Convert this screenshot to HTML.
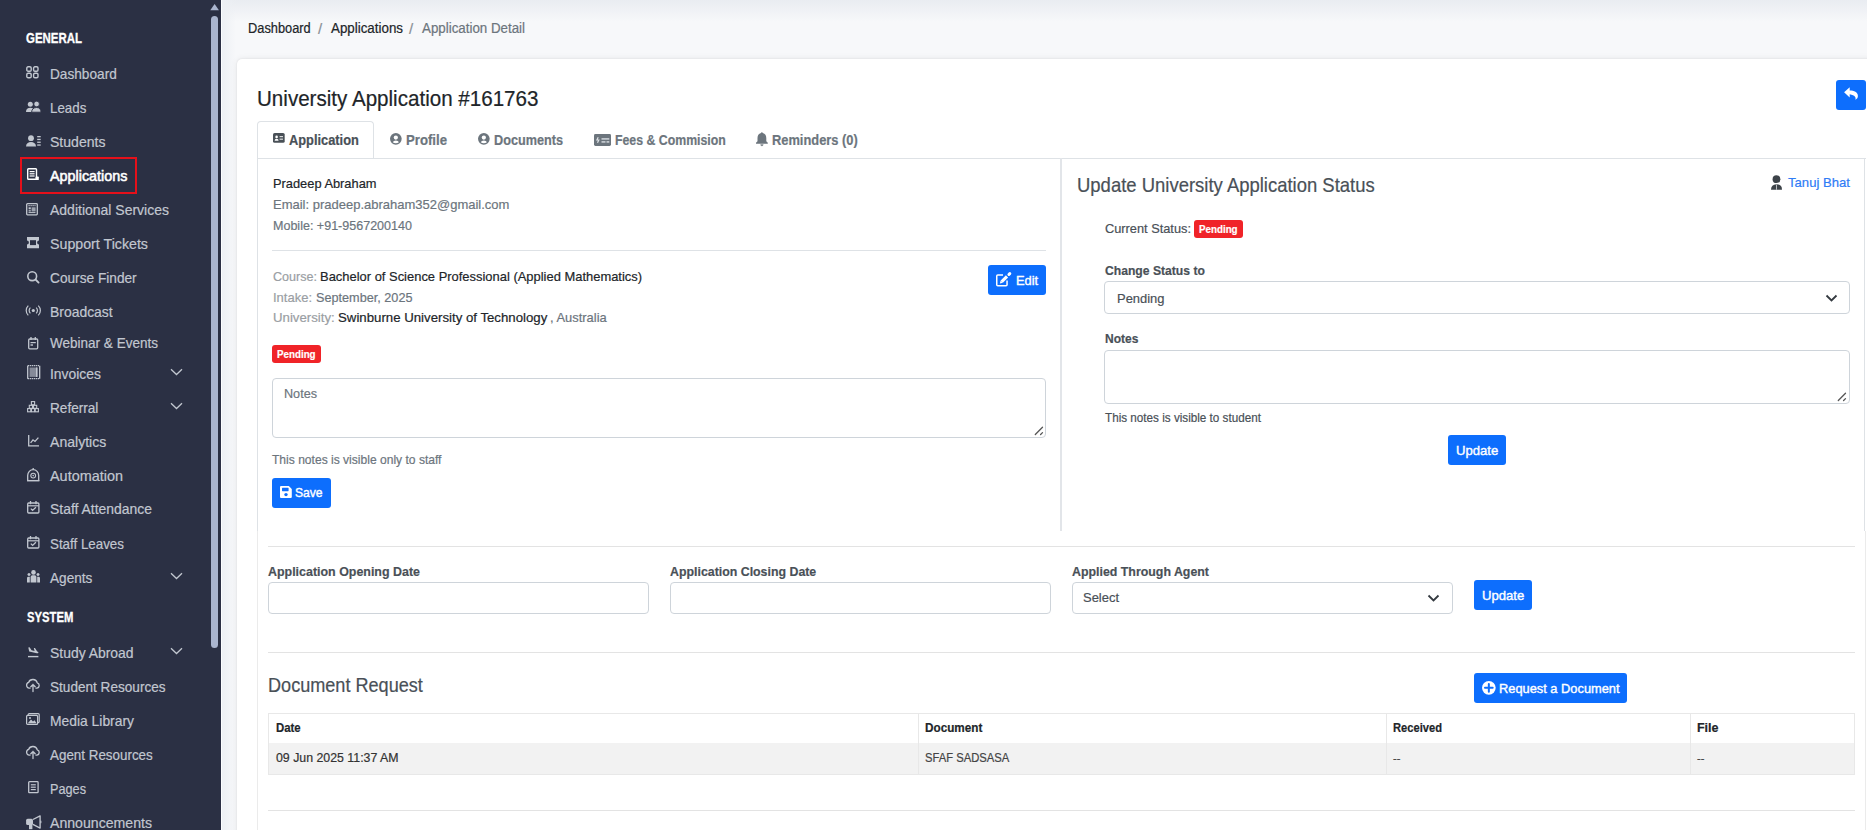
<!DOCTYPE html>
<html><head><meta charset="utf-8"><style>
html,body{margin:0;padding:0;}
body{width:1867px;height:830px;overflow:hidden;position:relative;background:#f7f8fa;font-family:"Liberation Sans",sans-serif;}
.t{position:absolute;white-space:nowrap;line-height:1;transform-origin:0 0;-webkit-text-stroke:0.2px currentColor;}
.sidebar{position:absolute;left:0;top:0;width:221px;height:830px;background:#2b3044;}
.card{position:absolute;left:237px;top:59px;width:1640px;height:800px;background:#fff;border-radius:5px;box-shadow:0 0 2px rgba(0,0,0,.10),0 0 7px rgba(0,0,0,.07);}
.topshade{position:absolute;left:221px;top:0;width:1646px;height:22px;background:linear-gradient(#e9ecf1,rgba(247,248,250,0));}
.sbshade{position:absolute;left:222px;top:0;width:14px;height:830px;background:linear-gradient(90deg,#edf0f4,rgba(247,248,250,0));}
</style></head><body>
<div class="topshade"></div><div class="sbshade"></div>
<div class="card"></div>
<div class="sidebar"></div>
<div style="position:absolute;left:221px;top:0px;width:1px;height:830px;background:#fbfdff;"></div>
<svg style="position:absolute;left:210px;top:3px" width="10" height="9"><path d="M0.3 7.3 L4.6 1.0 L8.9 7.3 Z" fill="#aab5cf"/></svg>
<div style="position:absolute;left:211px;top:16px;width:7px;height:632px;background:#aab5cf;border-radius:3.5px;"></div>
<div class="t" style="left:26.1px;top:31.28px;font-size:14.20px;color:#ffffff;font-weight:bold;transform:scaleX(0.8066);-webkit-text-stroke:0.3px #fff;">GENERAL</div>
<div class="t" style="left:26.7px;top:609.88px;font-size:14.20px;color:#ffffff;font-weight:bold;transform:scaleX(0.7930);-webkit-text-stroke:0.3px #fff;">SYSTEM</div>
<div class="t" style="left:50.3px;top:66.84px;font-size:14.60px;color:#c2c7d0;transform:scaleX(0.9353);">Dashboard</div>
<div class="t" style="left:50.3px;top:100.94px;font-size:14.60px;color:#c2c7d0;transform:scaleX(0.9126);">Leads</div>
<div class="t" style="left:50.3px;top:134.74px;font-size:14.60px;color:#c2c7d0;transform:scaleX(0.9631);">Students</div>
<div class="t" style="left:50.3px;top:168.54px;font-size:14.60px;color:#ffffff;transform:scaleX(0.9832);-webkit-text-stroke:0.55px #fff;">Applications</div>
<div class="t" style="left:50.3px;top:202.74px;font-size:14.60px;color:#c2c7d0;transform:scaleX(0.9584);">Additional Services</div>
<div class="t" style="left:50.3px;top:236.74px;font-size:14.60px;color:#c2c7d0;transform:scaleX(0.9740);">Support Tickets</div>
<div class="t" style="left:50.3px;top:270.94px;font-size:14.60px;color:#c2c7d0;transform:scaleX(0.9373);">Course Finder</div>
<div class="t" style="left:50.3px;top:304.74px;font-size:14.60px;color:#c2c7d0;transform:scaleX(0.9539);">Broadcast</div>
<div class="t" style="left:50.3px;top:335.94px;font-size:14.60px;color:#c2c7d0;transform:scaleX(0.9264);">Webinar &amp; Events</div>
<div class="t" style="left:50.3px;top:366.64px;font-size:14.60px;color:#c2c7d0;transform:scaleX(0.9523);">Invoices</div>
<div class="t" style="left:50.3px;top:400.64px;font-size:14.60px;color:#c2c7d0;transform:scaleX(0.9321);">Referral</div>
<div class="t" style="left:50.3px;top:434.84px;font-size:14.60px;color:#c2c7d0;transform:scaleX(0.9637);">Analytics</div>
<div class="t" style="left:50.3px;top:468.64px;font-size:14.60px;color:#c2c7d0;transform:scaleX(0.9885);">Automation</div>
<div class="t" style="left:50.3px;top:502.44px;font-size:14.60px;color:#c2c7d0;transform:scaleX(0.9544);">Staff Attendance</div>
<div class="t" style="left:50.3px;top:536.64px;font-size:14.60px;color:#c2c7d0;transform:scaleX(0.9148);">Staff Leaves</div>
<div class="t" style="left:50.3px;top:570.64px;font-size:14.60px;color:#c2c7d0;transform:scaleX(0.9329);">Agents</div>
<div class="t" style="left:50.3px;top:645.84px;font-size:14.60px;color:#c2c7d0;transform:scaleX(0.9537);">Study Abroad</div>
<div class="t" style="left:50.3px;top:679.54px;font-size:14.60px;color:#c2c7d0;transform:scaleX(0.9310);">Student Resources</div>
<div class="t" style="left:50.3px;top:714.04px;font-size:14.60px;color:#c2c7d0;transform:scaleX(0.9498);">Media Library</div>
<div class="t" style="left:50.3px;top:748.14px;font-size:14.60px;color:#c2c7d0;transform:scaleX(0.9179);">Agent Resources</div>
<div class="t" style="left:50.3px;top:782.04px;font-size:14.60px;color:#c2c7d0;transform:scaleX(0.8697);">Pages</div>
<div class="t" style="left:50.3px;top:815.74px;font-size:14.60px;color:#c2c7d0;transform:scaleX(0.9668);">Announcements</div>
<div style="position:absolute;left:20px;top:157px;width:117px;height:37px;border:2px solid #e5101a;box-sizing:border-box;"></div>
<svg style="position:absolute;left:170px;top:368.0px" width="13" height="8"><path d="M1 1.2 L6.5 6.5 L12 1.2" stroke="#c2c7d0" stroke-width="1.3" fill="none"/></svg>
<svg style="position:absolute;left:170px;top:402.0px" width="13" height="8"><path d="M1 1.2 L6.5 6.5 L12 1.2" stroke="#c2c7d0" stroke-width="1.3" fill="none"/></svg>
<svg style="position:absolute;left:170px;top:572.0px" width="13" height="8"><path d="M1 1.2 L6.5 6.5 L12 1.2" stroke="#c2c7d0" stroke-width="1.3" fill="none"/></svg>
<svg style="position:absolute;left:170px;top:647.2px" width="13" height="8"><path d="M1 1.2 L6.5 6.5 L12 1.2" stroke="#c2c7d0" stroke-width="1.3" fill="none"/></svg>
<div class="t" style="left:248.0px;top:22.12px;font-size:13.80px;color:#212529;transform:scaleX(0.9288);">Dashboard</div>
<div class="t" style="left:318.0px;top:21.00px;font-size:15.00px;color:#8a9096;">/</div>
<div class="t" style="left:330.8px;top:22.12px;font-size:13.80px;color:#212529;transform:scaleX(0.9676);">Applications</div>
<div class="t" style="left:409.0px;top:21.00px;font-size:15.00px;color:#8a9096;">/</div>
<div class="t" style="left:421.7px;top:22.12px;font-size:13.80px;color:#6c757d;transform:scaleX(0.9660);">Application Detail</div>
<div class="t" style="left:257.1px;top:87.92px;font-size:21.60px;color:#212529;transform:scaleX(0.9530);">University Application #161763</div>
<div style="position:absolute;left:1836px;top:79.5px;width:30px;height:30px;background:#0d6efd;border-radius:3px;"></div>
<div style="position:absolute;left:257px;top:121px;width:117px;height:38px;border:1px solid #dee2e6;border-bottom:none;border-radius:4px 4px 0 0;background:#fff;box-sizing:border-box;"></div>
<div style="position:absolute;left:257px;top:158px;width:1609px;height:1px;background:#dee2e6;"></div>
<div class="t" style="left:288.5px;top:133.05px;font-size:14.00px;color:#495057;font-weight:bold;transform:scaleX(0.9158);">Application</div>
<div class="t" style="left:405.9px;top:133.05px;font-size:14.00px;color:#6c757d;font-weight:bold;transform:scaleX(0.9411);">Profile</div>
<div class="t" style="left:494.2px;top:133.05px;font-size:14.00px;color:#6c757d;font-weight:bold;transform:scaleX(0.9052);">Documents</div>
<div class="t" style="left:614.6px;top:133.05px;font-size:14.00px;color:#6c757d;font-weight:bold;transform:scaleX(0.8792);">Fees &amp; Commision</div>
<div class="t" style="left:771.7px;top:133.05px;font-size:14.00px;color:#6c757d;font-weight:bold;transform:scaleX(0.9180);">Reminders (0)</div>
<div style="position:absolute;left:257px;top:158px;width:1px;height:373px;background:#dee2e6;"></div>
<div style="position:absolute;left:1864px;top:158px;width:1px;height:373px;background:#dee2e6;"></div>
<div style="position:absolute;left:257px;top:531px;width:1px;height:299px;background:#ebebeb;"></div>
<div style="position:absolute;left:1865px;top:531px;width:1px;height:299px;background:#ebebeb;"></div>
<div style="position:absolute;left:1060px;top:158px;width:2px;height:373px;background:#e2e5e9;"></div>
<div class="t" style="left:272.8px;top:177.39px;font-size:13.60px;color:#212529;transform:scaleX(0.9442);">Pradeep Abraham</div>
<div class="t" style="left:272.8px;top:198.29px;font-size:13.60px;color:#6c757d;transform:scaleX(0.9560);">Email: pradeep.abraham352@gmail.com</div>
<div class="t" style="left:272.8px;top:219.19px;font-size:13.60px;color:#6c757d;transform:scaleX(0.9215);">Mobile: +91-9567200140</div>
<div style="position:absolute;left:272px;top:250px;width:774px;height:1.3px;background:#dee2e6;"></div>
<div class="t" style="left:272.5px;top:269.69px;font-size:13.60px;color:#9a9ea3;transform:scaleX(0.9240);">Course:</div>
<div class="t" style="left:319.6px;top:269.69px;font-size:13.60px;color:#212529;transform:scaleX(0.9515);">Bachelor of Science Professional (Applied Mathematics)</div>
<div class="t" style="left:272.5px;top:290.79px;font-size:13.60px;color:#9a9ea3;transform:scaleX(0.9553);">Intake:</div>
<div class="t" style="left:315.6px;top:290.79px;font-size:13.60px;color:#6c757d;transform:scaleX(0.9317);">September, 2025</div>
<div class="t" style="left:272.5px;top:311.49px;font-size:13.60px;color:#9a9ea3;transform:scaleX(0.9720);">University:</div>
<div class="t" style="left:337.6px;top:311.49px;font-size:13.60px;color:#212529;transform:scaleX(0.9731);">Swinburne University of Technology</div>
<div class="t" style="left:550.3px;top:311.49px;font-size:13.60px;color:#6c757d;transform:scaleX(0.9495);">, Australia</div>
<div style="position:absolute;left:272px;top:345px;width:49px;height:17.8px;background:#f02328;border-radius:3px;"></div>
<div class="t" style="left:277.1px;top:348.76px;font-size:10.80px;color:#fff;font-weight:bold;transform:scaleX(0.9062);">Pending</div>
<div style="position:absolute;left:988px;top:265.4px;width:58px;height:30px;background:#0d6efd;border-radius:3px;"></div>
<div class="t" style="left:1015.7px;top:273.99px;font-size:13.60px;color:#fff;transform:scaleX(0.9473);-webkit-text-stroke:0.4px #fff;">Edit</div>
<div style="position:absolute;left:272px;top:377.5px;width:774px;height:60px;border:1px solid #ced4da;border-radius:4px;box-sizing:border-box;"></div>
<div class="t" style="left:284.0px;top:387.49px;font-size:13.60px;color:#6c757d;transform:scaleX(0.9289);">Notes</div>
<div class="t" style="left:272.3px;top:453.96px;font-size:12.80px;color:#6c757d;transform:scaleX(0.9430);">This notes is visible only to staff</div>
<div style="position:absolute;left:272px;top:477.5px;width:59px;height:30px;background:#0d6efd;border-radius:3px;"></div>
<div class="t" style="left:295.4px;top:485.79px;font-size:13.60px;color:#fff;transform:scaleX(0.8904);-webkit-text-stroke:0.4px #fff;">Save</div>
<div class="t" style="left:1076.8px;top:175.64px;font-size:19.80px;color:#495057;transform:scaleX(0.9337);">Update University Application Status</div>
<div class="t" style="left:1787.9px;top:176.49px;font-size:13.60px;color:#2f7cf6;transform:scaleX(0.9648);">Tanuj Bhat</div>
<div class="t" style="left:1104.6px;top:221.79px;font-size:13.60px;color:#495057;transform:scaleX(0.9403);">Current Status:</div>
<div style="position:absolute;left:1194.2px;top:219.7px;width:48.5px;height:18.6px;background:#f02328;border-radius:3px;"></div>
<div class="t" style="left:1199.3px;top:223.96px;font-size:10.80px;color:#fff;font-weight:bold;transform:scaleX(0.9062);">Pending</div>
<div class="t" style="left:1104.6px;top:263.59px;font-size:13.60px;color:#495057;font-weight:bold;transform:scaleX(0.8934);">Change Status to</div>
<div style="position:absolute;left:1104px;top:280.7px;width:746px;height:33.3px;border:1px solid #ced4da;border-radius:4px;box-sizing:border-box;"></div>
<div class="t" style="left:1116.5px;top:291.99px;font-size:13.60px;color:#495057;transform:scaleX(0.9518);">Pending</div>
<svg style="position:absolute;left:1825px;top:293.5px" width="13" height="9"><path d="M1.5 1.5 L6.5 6.5 L11.5 1.5" stroke="#343a40" stroke-width="1.8" fill="none"/></svg>
<div class="t" style="left:1104.5px;top:332.49px;font-size:13.60px;color:#495057;font-weight:bold;transform:scaleX(0.8840);">Notes</div>
<div style="position:absolute;left:1104px;top:350px;width:746px;height:53.5px;border:1px solid #ced4da;border-radius:4px;box-sizing:border-box;"></div>
<div class="t" style="left:1104.5px;top:411.76px;font-size:12.80px;color:#495057;transform:scaleX(0.9137);">This notes is visible to student</div>
<div style="position:absolute;left:1448px;top:435.3px;width:58px;height:30px;background:#0d6efd;border-radius:3px;"></div>
<div class="t" style="left:1456.0px;top:443.69px;font-size:13.60px;color:#fff;transform:scaleX(0.9646);-webkit-text-stroke:0.4px #fff;">Update</div>
<div style="position:absolute;left:268px;top:545.5px;width:1587px;height:1.3px;background:#e3e3e3;"></div>
<div class="t" style="left:268.0px;top:564.59px;font-size:13.60px;color:#495057;font-weight:bold;transform:scaleX(0.9145);">Application Opening Date</div>
<div style="position:absolute;left:268px;top:581.6px;width:381px;height:32.5px;border:1px solid #ced4da;border-radius:4px;box-sizing:border-box;"></div>
<div class="t" style="left:669.9px;top:564.59px;font-size:13.60px;color:#495057;font-weight:bold;transform:scaleX(0.9091);">Application Closing Date</div>
<div style="position:absolute;left:670px;top:581.6px;width:381px;height:32.5px;border:1px solid #ced4da;border-radius:4px;box-sizing:border-box;"></div>
<div class="t" style="left:1071.5px;top:564.59px;font-size:13.60px;color:#495057;font-weight:bold;transform:scaleX(0.9099);">Applied Through Agent</div>
<div style="position:absolute;left:1072px;top:581.6px;width:381px;height:32.5px;border:1px solid #ced4da;border-radius:4px;box-sizing:border-box;"></div>
<div class="t" style="left:1083.2px;top:591.29px;font-size:13.60px;color:#495057;transform:scaleX(0.9524);">Select</div>
<svg style="position:absolute;left:1427px;top:594px" width="13" height="9"><path d="M1.5 1.5 L6.5 6.5 L11.5 1.5" stroke="#343a40" stroke-width="1.8" fill="none"/></svg>
<div style="position:absolute;left:1474px;top:580.4px;width:58px;height:30px;background:#0d6efd;border-radius:3px;"></div>
<div class="t" style="left:1482.0px;top:588.79px;font-size:13.60px;color:#fff;transform:scaleX(0.9646);-webkit-text-stroke:0.4px #fff;">Update</div>
<div style="position:absolute;left:268px;top:651.5px;width:1587px;height:1.3px;background:#e3e3e3;"></div>
<div class="t" style="left:268.0px;top:675.94px;font-size:19.80px;color:#495057;transform:scaleX(0.9146);">Document Request</div>
<div style="position:absolute;left:1474px;top:673.3px;width:153px;height:30px;background:#0d6efd;border-radius:3px;"></div>
<div class="t" style="left:1499.1px;top:681.99px;font-size:13.60px;color:#fff;transform:scaleX(0.9440);-webkit-text-stroke:0.4px #fff;">Request a Document</div>
<div style="position:absolute;left:268px;top:713px;width:1587px;height:62px;border:1px solid #e8e8e8;box-sizing:border-box;"></div>
<div style="position:absolute;left:269px;top:742.5px;width:1585px;height:31.5px;background:#f2f2f2;"></div>
<div style="position:absolute;left:917.5px;top:713px;width:1px;height:62px;background:#e8e8e8;"></div>
<div style="position:absolute;left:1385.5px;top:713px;width:1px;height:62px;background:#e8e8e8;"></div>
<div style="position:absolute;left:1689.5px;top:713px;width:1px;height:62px;background:#e8e8e8;"></div>
<div class="t" style="left:276.0px;top:722.26px;font-size:12.80px;color:#212529;font-weight:bold;transform:scaleX(0.8903);">Date</div>
<div class="t" style="left:925.4px;top:722.16px;font-size:12.80px;color:#212529;font-weight:bold;transform:scaleX(0.9173);">Document</div>
<div class="t" style="left:1393.2px;top:722.16px;font-size:12.80px;color:#212529;font-weight:bold;transform:scaleX(0.8718);">Received</div>
<div class="t" style="left:1697.4px;top:722.16px;font-size:12.80px;color:#212529;font-weight:bold;transform:scaleX(0.9751);">File</div>
<div class="t" style="left:276.0px;top:752.23px;font-size:12.60px;color:#333;transform:scaleX(0.9796);">09 Jun 2025 11:37 AM</div>
<div class="t" style="left:925.4px;top:752.13px;font-size:12.60px;color:#444;transform:scaleX(0.8928);">SFAF SADSASA</div>
<div class="t" style="left:1393.0px;top:753.19px;font-size:11.00px;color:#444;">--</div>
<div class="t" style="left:1697.0px;top:753.19px;font-size:11.00px;color:#444;">--</div>
<div style="position:absolute;left:268px;top:809.8px;width:1587px;height:1.3px;background:#e3e3e3;"></div>
<svg style="position:absolute;left:26.3px;top:66.0px;overflow:visible" width="13" height="13" viewBox="0 0 13 13"><rect x="0.8" y="0.8" width="4.4" height="4.4" rx="1.3" fill="none" stroke="#c2c7d0" stroke-width="1.4"/><rect x="0.8" y="7.3" width="4.4" height="4.4" rx="1.3" fill="none" stroke="#c2c7d0" stroke-width="1.4"/><rect x="7.6" y="0.8" width="4.4" height="4.4" rx="1.3" fill="none" stroke="#c2c7d0" stroke-width="1.4"/><rect x="7.6" y="7.3" width="4.4" height="4.4" rx="1.3" fill="none" stroke="#c2c7d0" stroke-width="1.4"/></svg>
<svg style="position:absolute;left:25.8px;top:101.0px;overflow:visible" width="15" height="12" viewBox="0 0 15 12"><circle cx="4.3" cy="3.2" r="2.5" fill="#c2c7d0"/><path d="M0 11 C0 8.2 1.8 6.8 4.3 6.8 C6.8 6.8 8.5 8.2 8.5 11 Z" fill="#c2c7d0"/><circle cx="10.6" cy="3.0" r="2.8" fill="#c2c7d0" stroke="#2b3044" stroke-width="0.8"/><path d="M5.6 11.2 C5.6 8.3 7.8 6.5 10.6 6.5 C13.4 6.5 15 8.3 15 11.2 Z" fill="#c2c7d0" stroke="#2b3044" stroke-width="0.9"/></svg>
<svg style="position:absolute;left:25.8px;top:134.7px;overflow:visible" width="15" height="12" viewBox="0 0 15 12"><circle cx="5" cy="3.2" r="2.9" fill="#c2c7d0"/><path d="M0 11.4 C0 8.4 2.2 6.9 5 6.9 C7.8 6.9 10 8.4 10 11.4 Z" fill="#c2c7d0"/><rect x="11.2" y="1.0" width="3.5" height="1.3" fill="#c2c7d0"/><rect x="11.2" y="3.8" width="3.5" height="1.3" fill="#c2c7d0"/><rect x="11.2" y="6.6" width="3.5" height="1.3" fill="#c2c7d0"/><rect x="11.2" y="9.4" width="3.5" height="1.3" fill="#c2c7d0"/></svg>
<svg style="position:absolute;left:27.1px;top:168.2px;overflow:visible" width="12" height="12" viewBox="0 0 12 12"><rect x="0.7" y="0.7" width="8.8" height="10.6" rx="0.8" fill="none" stroke="#ffffff" stroke-width="1.4"/><rect x="2.6" y="3.0" width="5" height="1.2" fill="#ffffff"/><rect x="2.6" y="5.2" width="5" height="1.2" fill="#ffffff"/><rect x="2.6" y="7.4" width="5" height="1.2" fill="#ffffff"/><rect x="8.6" y="8.6" width="3.2" height="3.4" rx="0.6" fill="#ffffff"/></svg>
<svg style="position:absolute;left:26.0px;top:203.3px;overflow:visible" width="12" height="12.5" viewBox="0 0 12 12.5"><rect x="0.7" y="0.7" width="10.6" height="11.1" rx="0.8" fill="none" stroke="#c2c7d0" stroke-width="1.3"/><path d="M2.5 2.6 H9.5" stroke="#c2c7d0" stroke-width="1.2" stroke-dasharray="1.2 0.8"/><rect x="2.6" y="4.3" width="2.2" height="2" fill="#c2c7d0"/><rect x="5.6" y="4.3" width="4" height="4.2" fill="#c2c7d0" opacity="0.75"/><rect x="2.6" y="7.2" width="2.2" height="1.3" fill="#c2c7d0"/><path d="M2.5 9.6 H9.5" stroke="#c2c7d0" stroke-width="1"/></svg>
<svg style="position:absolute;left:27.0px;top:236.7px;overflow:visible" width="12" height="11.3" viewBox="0 0 12 11.3"><path d="M0 0 H12 V3.6 A1.9 1.9 0 0 0 12 7.4 V11.3 H0 V7.4 A1.9 1.9 0 0 0 0 3.6 Z" fill="#c2c7d0"/><rect x="3" y="3.2" width="6" height="4.9" fill="#2b3044"/></svg>
<svg style="position:absolute;left:26.9px;top:270.5px;overflow:visible" width="12.5" height="12.5" viewBox="0 0 12.5 12.5"><circle cx="5.2" cy="5.2" r="4.4" fill="none" stroke="#c2c7d0" stroke-width="1.6"/><path d="M8.5 8.5 L11.6 11.6" stroke="#c2c7d0" stroke-width="1.8" stroke-linecap="round"/></svg>
<svg style="position:absolute;left:25.8px;top:305.0px;overflow:visible" width="14.6" height="11" viewBox="0 0 14.6 11"><circle cx="7.3" cy="5.5" r="1.6" fill="#c2c7d0"/><path d="M4.4 2.6 A4 4 0 0 0 4.4 8.4 M10.2 2.6 A4 4 0 0 1 10.2 8.4" fill="none" stroke="#c2c7d0" stroke-width="1.2"/><path d="M2.3 0.6 A6.8 6.8 0 0 0 2.3 10.4 M12.3 0.6 A6.8 6.8 0 0 1 12.3 10.4" fill="none" stroke="#c2c7d0" stroke-width="1.2"/></svg>
<svg style="position:absolute;left:28.0px;top:336.8px;overflow:visible" width="10.4" height="12.5" viewBox="0 0 10.4 12.5"><rect x="0.7" y="2" width="9" height="9.8" rx="1" fill="none" stroke="#c2c7d0" stroke-width="1.3"/><path d="M3 0 V3 M7.3 0 V3" stroke="#c2c7d0" stroke-width="1.3"/><rect x="2.5" y="5" width="5.3" height="1.2" fill="#c2c7d0"/><rect x="2.5" y="7.3" width="2.5" height="1.4" fill="#c2c7d0"/></svg>
<svg style="position:absolute;left:26.6px;top:365.2px;overflow:visible" width="13.4" height="14.4" viewBox="0 0 13.4 14.4"><path d="M0.7 0.7 V13.7 M12.7 0.7 V13.7" stroke="#c2c7d0" stroke-width="1.3"/><path d="M0.7 0.7 H12.7 M0.7 13.7 H12.7" stroke="#c2c7d0" stroke-width="1.3" stroke-dasharray="1.4 0.6"/><rect x="2.5" y="2.5" width="8.4" height="9.4" fill="#c2c7d0" opacity="0.6"/><path d="M9.6 2.5 V11.9" stroke="#c2c7d0" stroke-width="1.1"/></svg>
<svg style="position:absolute;left:27.2px;top:401.0px;overflow:visible" width="12" height="11" viewBox="0 0 12 11"><rect x="4.4" y="0.6" width="3.2" height="3.2" fill="none" stroke="#c2c7d0" stroke-width="1.1"/><rect x="2.3" y="4.3" width="3.2" height="3" fill="none" stroke="#c2c7d0" stroke-width="1.1"/><rect x="6.5" y="4.3" width="3.2" height="3" fill="none" stroke="#c2c7d0" stroke-width="1.1"/><rect x="0.6" y="7.6" width="3.2" height="3.2" fill="none" stroke="#c2c7d0" stroke-width="1.1"/><rect x="4.4" y="7.6" width="3.2" height="3.2" fill="none" stroke="#c2c7d0" stroke-width="1.1"/><rect x="8.2" y="7.6" width="3.2" height="3.2" fill="none" stroke="#c2c7d0" stroke-width="1.1"/></svg>
<svg style="position:absolute;left:27.8px;top:434.6px;overflow:visible" width="11" height="11.4" viewBox="0 0 11 11.4"><path d="M0.7 0 V10.8 H11" fill="none" stroke="#c2c7d0" stroke-width="1.3"/><path d="M2.6 7.8 L5 4.8 L7 6.4 L10.4 2.6" fill="none" stroke="#c2c7d0" stroke-width="1.3"/></svg>
<svg style="position:absolute;left:26.7px;top:467.8px;overflow:visible" width="12.4" height="13" viewBox="0 0 12.4 13"><path d="M0.7 12.6 V7.5 A5.5 5.8 0 0 1 11.7 7.5 V12.6 Z" fill="none" stroke="#c2c7d0" stroke-width="1.3"/><path d="M6.2 0 V1.8" stroke="#c2c7d0" stroke-width="1.3"/><circle cx="6.2" cy="7.6" r="2.4" fill="none" stroke="#c2c7d0" stroke-width="1.1"/><circle cx="6.2" cy="7.6" r="0.8" fill="#c2c7d0"/><path d="M0 12.6 H12.4" stroke="#c2c7d0" stroke-width="1.3"/></svg>
<svg style="position:absolute;left:26.7px;top:501.2px;overflow:visible" width="12.6" height="12.6" viewBox="0 0 12.6 12.6"><rect x="0.7" y="2" width="11.2" height="10" rx="1" fill="none" stroke="#c2c7d0" stroke-width="1.3"/><path d="M3.5 0 V3.2 M9 0 V3.2" stroke="#c2c7d0" stroke-width="1.3"/><path d="M0.7 4.8 H11.9" stroke="#c2c7d0" stroke-width="1.2"/><path d="M3.8 7.6 L5.6 9.4 L8.9 6.2" fill="none" stroke="#c2c7d0" stroke-width="1.3"/></svg>
<svg style="position:absolute;left:26.7px;top:535.6px;overflow:visible" width="12.6" height="12.6" viewBox="0 0 12.6 12.6"><rect x="0.7" y="2" width="11.2" height="10" rx="1" fill="none" stroke="#c2c7d0" stroke-width="1.3"/><path d="M3.5 0 V3.2 M9 0 V3.2" stroke="#c2c7d0" stroke-width="1.3"/><path d="M0.7 4.8 H11.9" stroke="#c2c7d0" stroke-width="1.2"/><path d="M3.8 7.6 L5.6 9.4 L8.9 6.2" fill="none" stroke="#c2c7d0" stroke-width="1.3"/></svg>
<svg style="position:absolute;left:26.7px;top:570.2px;overflow:visible" width="13" height="12.6" viewBox="0 0 13 12.6"><circle cx="6.5" cy="2.4" r="2.3" fill="#c2c7d0"/><path d="M3.6 12.6 V7 Q3.6 5.2 5.4 5.2 H7.6 Q9.4 5.2 9.4 7 V12.6 Z" fill="#c2c7d0"/><circle cx="2" cy="4.6" r="1.5" fill="#c2c7d0"/><circle cx="11" cy="4.6" r="1.5" fill="#c2c7d0"/><path d="M0 12.6 V8.2 Q0 6.8 1.4 6.8 H2.8 V12.6 Z M10.2 6.8 H11.6 Q13 6.8 13 8.2 V12.6 H10.2 Z" fill="#c2c7d0"/></svg>
<svg style="position:absolute;left:27.7px;top:646.5px;overflow:visible" width="10.4" height="10.6" viewBox="0 0 10.4 10.6"><path d="M0.3 0.6 L1.6 0.2 L3.6 3.2 L6.6 3.9 L5.8 0.9 L7.0 1.1 L9.2 4.5 L10.0 4.7 Q10.8 5.2 10.2 6.0 Q9.8 6.4 8.8 6.2 L1.2 4.6 Z" fill="#c2c7d0"/><path d="M0 9.6 H10.4" stroke="#c2c7d0" stroke-width="1.4"/></svg>
<svg style="position:absolute;left:26.1px;top:678.9px;overflow:visible" width="14.2" height="12.5" viewBox="0 0 14.2 12.5"><path d="M4 9.2 H3.2 A3 3 0 0 1 2.6 3.4 A4.6 4.6 0 0 1 11.3 3.8 A2.8 2.8 0 0 1 11 9.2 H10" fill="none" stroke="#c2c7d0" stroke-width="1.3" stroke-linecap="round"/><path d="M7 12.5 V5.5 M4.8 7.7 L7 5.5 L9.2 7.7" fill="none" stroke="#c2c7d0" stroke-width="1.3" stroke-linecap="round"/></svg>
<svg style="position:absolute;left:26.1px;top:746.4px;overflow:visible" width="14.2" height="12.5" viewBox="0 0 14.2 12.5"><path d="M4 9.2 H3.2 A3 3 0 0 1 2.6 3.4 A4.6 4.6 0 0 1 11.3 3.8 A2.8 2.8 0 0 1 11 9.2 H10" fill="none" stroke="#c2c7d0" stroke-width="1.3" stroke-linecap="round"/><path d="M7 12.5 V5.5 M4.8 7.7 L7 5.5 L9.2 7.7" fill="none" stroke="#c2c7d0" stroke-width="1.3" stroke-linecap="round"/></svg>
<svg style="position:absolute;left:26.0px;top:713.2px;overflow:visible" width="13.8" height="12" viewBox="0 0 13.8 12"><rect x="2.2" y="0.6" width="11" height="9" rx="1" fill="none" stroke="#c2c7d0" stroke-width="1.2"/><rect x="0.6" y="2.4" width="11" height="9" rx="1" fill="#2b3044" stroke="#c2c7d0" stroke-width="1.2"/><path d="M1.8 10.3 L5 6.5 L7 8.5 L8.5 7.2 L10.6 10.3 Z" fill="#c2c7d0"/><circle cx="4" cy="5" r="1" fill="#c2c7d0"/></svg>
<svg style="position:absolute;left:27.7px;top:780.8px;overflow:visible" width="10.8" height="12.4" viewBox="0 0 10.8 12.4"><rect x="0.7" y="0.7" width="9.4" height="11" rx="0.8" fill="none" stroke="#c2c7d0" stroke-width="1.3"/><rect x="2.8" y="3.2" width="5" height="1.2" fill="#c2c7d0"/><rect x="2.8" y="5.6" width="5" height="1.2" fill="#c2c7d0"/><rect x="2.8" y="8.0" width="5" height="1.2" fill="#c2c7d0"/></svg>
<svg style="position:absolute;left:26.1px;top:815.0px;overflow:visible" width="15.4" height="15" viewBox="0 0 15.4 15"><rect x="0.1" y="3.7" width="6.9" height="6.3" rx="1.6" fill="#c2c7d0"/><rect x="3.0" y="9" width="3.4" height="5.2" fill="#c2c7d0"/><path d="M6.9 4.5 L14.1 0.9 V13.1 L6.9 9.4" fill="none" stroke="#c2c7d0" stroke-width="1.35" stroke-linejoin="round"/><rect x="14.3" y="5.6" width="1.1" height="2.6" rx="0.5" fill="#c2c7d0"/></svg>
<svg style="position:absolute;left:272.6px;top:133.3px;overflow:visible" width="11.7" height="9.8" viewBox="0 0 11.7 9.8"><rect x="0" y="0" width="11.7" height="9.8" rx="1.6" fill="#495057"/><circle cx="3.6" cy="3.9" r="1.3" fill="#fff"/><path d="M1.6 7.8 Q1.6 5.8 3.6 5.8 Q5.6 5.8 5.6 7.8 Z" fill="#fff"/><rect x="6.6" y="3" width="3.4" height="1.2" fill="#fff" opacity="0.8"/><rect x="6.6" y="5.6" width="3.4" height="1.2" fill="#fff" opacity="0.8"/></svg>
<svg style="position:absolute;left:390.1px;top:132.6px;overflow:visible" width="11.7" height="11.9" viewBox="0 0 11.7 11.9"><circle cx="5.85" cy="5.85" r="5.85" fill="#6c757d"/><circle cx="5.85" cy="4.6" r="2.1" fill="#fff"/><path d="M2.8 9.2 Q3.4 7.6 5.85 7.6 Q8.3 7.6 8.9 9.2 Q7.6 10.3 5.85 10.3 Q4.1 10.3 2.8 9.2 Z" fill="#fff"/></svg>
<svg style="position:absolute;left:478.1px;top:132.6px;overflow:visible" width="11.7" height="11.9" viewBox="0 0 11.7 11.9"><circle cx="5.85" cy="5.85" r="5.85" fill="#6c757d"/><circle cx="5.85" cy="4.6" r="2.1" fill="#fff"/><path d="M2.8 9.2 Q3.4 7.6 5.85 7.6 Q8.3 7.6 8.9 9.2 Q7.6 10.3 5.85 10.3 Q4.1 10.3 2.8 9.2 Z" fill="#fff"/></svg>
<svg style="position:absolute;left:594.2px;top:133.6px;overflow:visible" width="17" height="11.9" viewBox="0 0 17 11.9"><rect x="0" y="0" width="17" height="11.9" rx="1.4" fill="#6c757d"/><path d="M4.2 3.2 L2.9 6 L4.8 6 L3.5 8.8" fill="none" stroke="#dfe3e7" stroke-width="1.2"/><rect x="7.5" y="4" width="7.8" height="1.8" fill="#c0c6cc"/><rect x="7.5" y="7.0" width="4" height="1.8" fill="#c0c6cc"/><rect x="12.5" y="7.0" width="2.8" height="1.8" fill="#c0c6cc"/></svg>
<svg style="position:absolute;left:756.1px;top:132.4px;overflow:visible" width="11.8" height="14.2" viewBox="0 0 11.8 14.2"><path d="M5.9 0.2 C6.5 0.2 6.8 0.6 6.8 1.1 C9.2 1.6 10.3 3.6 10.3 6 V9.2 L11.8 10.8 V11.7 H0 V10.8 L1.5 9.2 V6 C1.5 3.6 2.6 1.6 5 1.1 C5 0.6 5.3 0.2 5.9 0.2 Z" fill="#6c757d"/><path d="M4.3 12.3 Q4.5 14.2 5.9 14.2 Q7.3 14.2 7.5 12.3 Z" fill="#6c757d" opacity="0.85"/></svg>
<svg style="position:absolute;left:996.0px;top:271.0px;overflow:visible" width="16" height="16" viewBox="0 0 16 16"><path d="M7.0 3.95 H1.75 Q0.75 3.95 0.75 4.95 V13.75 Q0.75 14.75 1.75 14.75 H10.05 Q11.05 14.75 11.05 13.75 V9.6" fill="none" stroke="#fff" stroke-width="1.5"/><path d="M5.8 10.6 L11.0 5.4" stroke="#fff" stroke-width="3.1" stroke-linecap="butt"/><path d="M12.9 3.5 L13.8 2.6" stroke="#fff" stroke-width="3.0" stroke-linecap="round"/><path d="M3.9 12.5 L4.6 9.5 L6.9 11.8 Z" fill="#fff"/></svg>
<svg style="position:absolute;left:1033.5px;top:425.5px;overflow:visible" width="10" height="10" viewBox="0 0 10 10"><path d="M1.3 8.5 L8.5 1.3 M6.6 8.5 L8.5 6.6" stroke="#555" stroke-width="1.3" stroke-linecap="round"/></svg>
<svg style="position:absolute;left:1836.5px;top:391.5px;overflow:visible" width="10" height="10" viewBox="0 0 10 10"><path d="M1.3 8.5 L8.5 1.3 M6.6 8.5 L8.5 6.6" stroke="#555" stroke-width="1.3" stroke-linecap="round"/></svg>
<svg style="position:absolute;left:280.1px;top:485.5px;overflow:visible" width="11.8" height="12.1" viewBox="0 0 11.8 12.1"><path d="M1.1 0 H8.8 L11.8 3 V11 Q11.8 12.1 10.7 12.1 H1.1 Q0 12.1 0 11 V1.1 Q0 0 1.1 0 Z" fill="#fff"/><rect x="2" y="1.8" width="6.6" height="3.4" rx="0.6" fill="#0d6efd"/><circle cx="6" cy="8.6" r="1.7" fill="#0d6efd"/></svg>
<svg style="position:absolute;left:1482.0px;top:681.3px;overflow:visible" width="13.7" height="13.7" viewBox="0 0 13.7 13.7"><circle cx="6.85" cy="6.85" r="6.85" fill="#fff"/><path d="M6.85 3.0 V10.7 M3.0 6.85 H10.7" stroke="#0d6efd" stroke-width="2" stroke-linecap="round"/></svg>
<svg style="position:absolute;left:1844.0px;top:87.0px;overflow:visible" width="14" height="12.8" viewBox="0 0 14 12.8"><path d="M0.1 5.3 L5.7 0.2 V3.5 C10 3.5 13.9 5 13.9 9 C13.9 10.6 13 11.9 11.4 12.7 C12.2 10.2 11 8.2 5.7 7.2 V10.4 Z" fill="#fff"/></svg>
<svg style="position:absolute;left:1771.2px;top:174.6px;overflow:visible" width="11" height="14.8" viewBox="0 0 11 14.8"><circle cx="5.5" cy="4.2" r="3.9" fill="#3d4349"/><path d="M0 14.8 Q0 9.4 5.5 9.2 Q11 9.4 11 14.8 Z" fill="#3d4349"/><path d="M5.5 9.6 V14.8" stroke="#c9ccd0" stroke-width="0.9"/></svg>
</body></html>
